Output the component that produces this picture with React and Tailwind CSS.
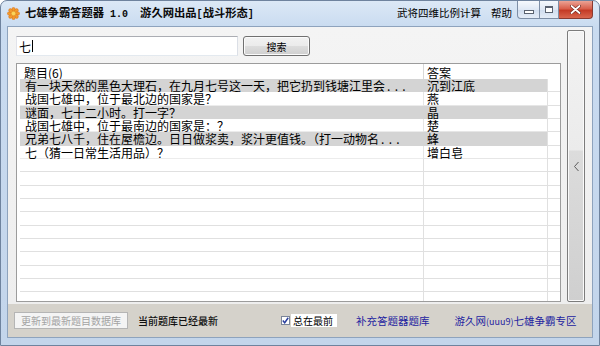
import React from "react";

const data = [
  { q: "有一块天然的黑色大理石，在九月七号这一天，把它扔到钱塘江里会", dots: true, a: "沉到江底", gray: true },
  { q: "战国七雄中，位于最北边的国家是？", a: "燕" },
  { q: "谜面，七十二小时。打一字？", a: "晶", gray: true },
  { q: "战国七雄中，位于最南边的国家是：？", a: "楚" },
  { q: "兄弟七八千，住在屋檐边。日日做浆卖，浆汁更值钱。（打一动物名", dots: true, a: "蜂", gray: true },
  { q: "七（猜一日常生活用品）？", a: "增白皂" },
];

function AppIcon() {
  const petals = [0, 45, 90, 135, 180, 225, 270, 315];
  return (
    <svg width="13" height="13" viewBox="0 0 26 26" className="shrink-0">
      {petals.map((r) => (
        <ellipse key={r} cx="13" cy="5.5" rx="3.6" ry="5" fill="#f39a2c" stroke="#d4691a" strokeWidth="0.8" transform={`rotate(${r} 13 13)`} />
      ))}
      <circle cx="13" cy="13" r="4.5" fill="#fbd35a" stroke="#d98a20" strokeWidth="0.8" />
    </svg>
  );
}

function Row({ r }) {
  if (!r) {
    return (
      <div className="h-[13.33px] flex shrink-0">
        <div className="w-[403px] border-b border-[#e0e0e0]" />
        <div className="w-[124px] border-l border-b border-[#e0e0e0]" />
        <div className="flex-1 border-l border-b border-[#e0e0e0]" />
      </div>
    );
  }
  return (
    <div className="h-[13.33px] flex shrink-0 text-[12px] leading-[13px] text-black">
      <div
        className={
          r.gray
            ? "w-[403px] bg-[#d4d4d4] border-b border-[#d4d4d4] pl-[5px] whitespace-nowrap"
            : "w-[403px] border-b border-[#ececec] pl-[5px] whitespace-nowrap"
        }
      >
        {r.q}
        {r.dots ? <span className="tracking-[4.3px] pl-[2px]">...</span> : null}
      </div>
      <div
        className={
          r.gray
            ? "w-[124px] bg-[#d4d4d4] border-l border-b border-[#d4d4d4] pl-[3px] whitespace-nowrap"
            : "w-[124px] border-l border-b border-[#e6e6e6] pl-[3px] whitespace-nowrap"
        }
      >
        {r.a}
      </div>
      <div className="flex-1 border-l border-b border-[#e0e0e0]" />
    </div>
  );
}

export default function App() {
  const empties = Array.from({ length: 11 });
  const mono = "font-['Liberation_Mono',monospace] text-[10px]";
  return (
    <div className="w-[600px] h-[346px] flex flex-col border border-[#6f839e] rounded-t-[7px] overflow-hidden bg-[linear-gradient(to_bottom,#dce8f6_0px,#c9dbf0_26px,#c3d5eb_100%)] font-['Noto_Sans_CJK_SC','Noto_Sans_CJK_JP',sans-serif] text-black">
      {/* Title bar */}
      <div className="h-[25px] flex items-start pl-[6px] pr-[6px] shrink-0">
        <div className="flex items-center h-[18px] mt-[3px] gap-[5px]">
          <AppIcon />
          <span className="text-[11.3px] font-bold leading-[12px] whitespace-pre text-[#0a0a0a]">
            七雄争霸答题器<span className={mono}>{" 1.0  "}</span>游久网出品<span className={mono}>{"["}</span>战斗形态<span className={mono}>{"]"}</span>
          </span>
        </div>
        <div className="flex-1" />
        <div className="flex items-center h-[18px] mt-[3px] text-[10.5px] leading-[12px] gap-[10px] mr-[5px]">
          <span>武将四维比例计算</span>
          <span>帮助</span>
        </div>
        <div className="flex items-start">
          <div className="w-[23px] h-[18px] border border-[#7d8ea6] border-t-0 rounded-bl-[4px] bg-[linear-gradient(to_bottom,#f6f9fd,#dfe8f4_50%,#cfdcee_51%,#e4ecf7)] flex items-center justify-center">
            <div className="w-[10px] h-[4px] border border-[#5a6270] bg-white mt-[4px]" />
          </div>
          <div className="w-[19px] h-[18px] border-b border-r border-[#7d8ea6] bg-[linear-gradient(to_bottom,#f6f9fd,#dfe8f4_50%,#cfdcee_51%,#e4ecf7)] flex items-center justify-center">
            <div className="w-[8px] h-[7px] border border-[#5a6270] border-t-2 bg-white" />
          </div>
          <div className="w-[34px] h-[18px] border-b border-r border-[#8a3a30] rounded-br-[4px] bg-[linear-gradient(to_bottom,#eba395,#d8604c_45%,#c43b26_55%,#d9664e)] flex items-center justify-center">
            <svg width="11" height="9" viewBox="0 0 11 9">
              <path d="M1.5 1 L9.5 8 M9.5 1 L1.5 8" stroke="#6b2018" strokeWidth="3" strokeLinecap="round" />
              <path d="M1.5 1 L9.5 8 M9.5 1 L1.5 8" stroke="#ffffff" strokeWidth="1.8" strokeLinecap="round" />
            </svg>
          </div>
        </div>
      </div>

      {/* Client area */}
      <div className="flex-1 mx-[6px] mb-[7px] border border-[#8ea3bd] flex flex-col min-h-0">
        <div className="flex-1 flex bg-[linear-gradient(to_bottom,#f4f4f4,#eeeeee)] min-h-0">
          {/* left column */}
          <div className="flex flex-col pl-[8px] pt-[9px]">
            <div className="flex items-center gap-[5px] h-[20px]">
              <div className="w-[222px] h-[20px] bg-white border border-[#abadb3] border-b-[#e3e9ef] border-l-[#e2e3ea] border-r-[#dbdfe6] flex items-center pl-[2px]">
                <span className="text-[12px] leading-[13px]">七</span>
                <span className="w-[1px] h-[12px] bg-black ml-[1px]" />
              </div>
              <div className="w-[67px] h-[20px] border border-[#707070] rounded-[3px] bg-[linear-gradient(to_bottom,#f2f2f2,#ebebeb_50%,#dddddd_51%,#cfcfcf)] flex items-center justify-center text-[10px] leading-[11px] shadow-[inset_0_0_0_1px_#fbfbfb]">
                搜索
              </div>
            </div>
            <div className="mt-[7px] w-[545px] h-[239px] border border-[#9c9c9c] bg-white pl-[3px] overflow-hidden flex flex-col">
              <div className="h-[15px] flex shrink-0 text-[12px] leading-[13px]">
                <div className="w-[403px] pl-[4px] pt-[2px] whitespace-nowrap">题目(6)</div>
                <div className="w-[124px] border-l border-[#d8d8d8] pl-[3px] pt-[2px]">答案</div>
                <div className="flex-1" />
              </div>
              {data.map((r, i) => (
                <Row key={i} r={r} />
              ))}
              {empties.map((_, i) => (
                <Row key={"e" + i} />
              ))}
            </div>
          </div>
          {/* right collapse panel */}
          <div className="ml-[6px] mt-[3px] w-[18px] h-[272px] border border-[#7c7c7c] rounded-[2px] shadow-[inset_0_0_0_1px_#fafafa] bg-[linear-gradient(to_bottom,#f3f3f3_0%,#ebebeb_44%,#dcdcdc_44.5%,#cfcfcf_100%)] flex items-start justify-center">
            <svg width="7" height="11" viewBox="0 0 7 11" className="mt-[130px]">
              <path d="M5.5 1 L1.5 5.5 L5.5 10" fill="none" stroke="#5c5c5c" strokeWidth="1" />
            </svg>
          </div>
        </div>

        {/* bottom bar */}
        <div className="h-[33px] shrink-0 bg-[#d5d2cb] flex items-center pl-[6px] text-[10px] leading-[11px]">
          <div className="w-[114px] h-[17px] border border-[#b5b5b5] bg-[#f4f4f4] flex items-center justify-center text-[#a3a3a3] whitespace-nowrap">
            更新到最新题目数据库
          </div>
          <span className="ml-[10px] whitespace-nowrap text-[#111] font-medium">当前题库已经最新</span>
          <div className="ml-[63px] flex items-center">
            <div className="w-[9px] h-[9px] border border-[#7a8599] bg-white flex items-center justify-center">
              <svg width="7" height="7" viewBox="0 0 7 7">
                <path d="M0.8 3.6 L2.7 5.8 L6.2 0.8" fill="none" stroke="#2a3f9e" strokeWidth="1.5" />
              </svg>
            </div>
            <div className="ml-[1px] h-[13px] bg-white pl-[2px] pr-[4px] flex items-center whitespace-nowrap">
              总在最前
            </div>
          </div>
          <span className="ml-[19px] whitespace-nowrap text-[#2323a0] text-[10.5px]">补充答题器题库</span>
          <span className="ml-[25px] whitespace-nowrap text-[#2323a0] text-[10.5px]">
            游久网<span className="text-[9px]">(uuu9)</span>七雄争霸专区
          </span>
        </div>
      </div>
    </div>
  );
}
